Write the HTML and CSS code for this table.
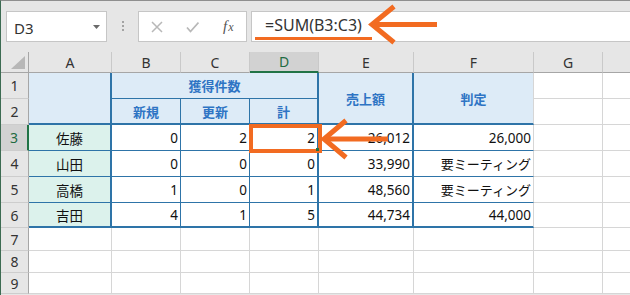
FILE: index.html
```html
<!DOCTYPE html>
<html lang="ja">
<head>
<meta charset="utf-8">
<title>Excel SUM</title>
<link rel="stylesheet" href="styles.css">
</head>
<body>
<div class="window">
  <div class="toolbar">
    <div class="namebox"><span>D3</span><svg class="dd" width="7" height="4" viewBox="0 0 7 4"><path d="M0 0H7L3.5 4Z" fill="#6a6a6a"/></svg></div>
    <div class="grip"><i></i><i></i><i></i></div>
    <div class="fxbox">
      <svg class="ico" width="12" height="12" viewBox="0 0 12 12"><path d="M1 1L11 11M11 1L1 11" stroke="#b8b8b8" stroke-width="1.5" fill="none"/></svg>
      <svg class="ico chk" width="13" height="12" viewBox="0 0 13 12"><path d="M1 6.5L4.5 10.5L12.5 1.5" stroke="#b8b8b8" stroke-width="1.8" fill="none"/></svg>
      <span class="fx">f<span class="fxx">x</span></span>
    </div>
    <div class="formula"><span class="ftext">=SUM(B3:C3)</span></div>
  </div>
  <div class="sheet">
    <div class="ch corner"><svg width="15" height="14" viewBox="0 0 15 14"><path d="M14 0V13H0Z" fill="#b7b7b7"/></svg></div>
    <div class="ch">A</div><div class="ch">B</div><div class="ch">C</div><div class="ch sel">D</div><div class="ch">E</div><div class="ch">F</div><div class="ch">G</div><div class="ch"></div>

    <div class="rh">1</div>
    <div class="c h a12 br2 bb2"></div>
    <div class="c h b1 br2 bb1">獲得件数</div>
    <div class="c h e12 br2 bb2">売上額</div>
    <div class="c h f12 bb2">判定</div>
    <div class="c"></div><div class="c"></div>

    <div class="rh">2</div>
    <div class="c h br1 bb2">新規</div>
    <div class="c h br1 bb2">更新</div>
    <div class="c h br2 bb2">計</div>
    <div class="c"></div><div class="c"></div>

    <div class="rh rsel">3</div>
    <div class="c nm br2 bb1">佐藤</div>
    <div class="c r br1 bb1">0</div><div class="c r br1 bb1">2</div><div class="c r br2 bb1">2</div>
    <div class="c r br2 bb1">26,012</div><div class="c r bb1">26,000</div>
    <div class="c"></div><div class="c"></div>

    <div class="rh">4</div>
    <div class="c nm br2 bb1">山田</div>
    <div class="c r br1 bb1">0</div><div class="c r br1 bb1">0</div><div class="c r br2 bb1">0</div>
    <div class="c r br2 bb1">33,990</div><div class="c r bb1 jp">要ミーティング</div>
    <div class="c"></div><div class="c"></div>

    <div class="rh">5</div>
    <div class="c nm br2 bb1">高橋</div>
    <div class="c r br1 bb1">1</div><div class="c r br1 bb1">0</div><div class="c r br2 bb1">1</div>
    <div class="c r br2 bb1">48,560</div><div class="c r bb1 jp">要ミーティング</div>
    <div class="c"></div><div class="c"></div>

    <div class="rh">6</div>
    <div class="c nm br2 bb2">吉田</div>
    <div class="c r br1 bb2">4</div><div class="c r br1 bb2">1</div><div class="c r br2 bb2">5</div>
    <div class="c r br2 bb2">44,734</div><div class="c r bb2">44,000</div>
    <div class="c"></div><div class="c"></div>

    <div class="rh">7</div>
    <div class="c"></div><div class="c"></div><div class="c"></div><div class="c"></div><div class="c"></div><div class="c"></div><div class="c"></div><div class="c"></div>
    <div class="rh">8</div>
    <div class="c"></div><div class="c"></div><div class="c"></div><div class="c"></div><div class="c"></div><div class="c"></div><div class="c"></div><div class="c"></div>
    <div class="rh">9</div>
    <div class="c"></div><div class="c"></div><div class="c"></div><div class="c"></div><div class="c"></div><div class="c"></div><div class="c"></div><div class="c"></div>
  </div>

  <svg class="overlay" width="630" height="295" viewBox="0 0 630 295">
    <rect x="251" y="126" width="69" height="25" fill="none" stroke="#f26b21" stroke-width="4"/>
    <rect x="316" y="148" width="3" height="3" fill="#217346"/>
    <rect x="255" y="37" width="117" height="3" fill="#f26b21"/>
    <path d="M374 24.5H437" stroke="#f26b21" stroke-width="5" fill="none"/>
    <path d="M394 6.5L372 24.5L394 42.5" stroke="#f26b21" stroke-width="5" fill="none" stroke-miterlimit="10"/>
    <path d="M325 139H388" stroke="#f26b21" stroke-width="5" fill="none"/>
    <path d="M346 120.5L324 139L346 157.5" stroke="#f26b21" stroke-width="5" fill="none" stroke-miterlimit="10"/>
  </svg>
</div>
</body>
</html>
```

FILE: styles.css
```css
* {
  box-sizing: border-box;
  margin: 0;
  padding: 0;
}

html, body {
  width: 630px;
  height: 295px;
  overflow: hidden;
  background: #e6e6e6;
}

body {
  font-family: "Noto Sans", "Noto Sans CJK JP", sans-serif;
}

.window {
  position: relative;
  width: 630px;
  height: 295px;
  border-left: 1px solid #3c6b52;
  border-top: 1px solid #8f8f8f;
  overflow: hidden;
  background: #e6e6e6;
}

/* toolbar */
.toolbar {
  display: flex;
  align-items: flex-start;
  height: 51px;
  padding: 10px 0 0 5px;
  background: #e6e6e6;
}

.namebox {
  width: 101px;
  height: 31px;
  flex: none;
  background: #fff;
  border: 1px solid #c6c6c6;
  display: flex;
  align-items: center;
  justify-content: space-between;
  padding: 2px 6px 0 7px;
  font-size: 15px;
  color: #333;
}

.namebox .dd {
  margin-bottom: 2px;
}

.grip {
  flex: none;
  margin: 10px 0 0 15px;
  width: 2px;
  display: flex;
  flex-direction: column;
  gap: 2px;
}

.grip i {
  display: block;
  width: 2px;
  height: 2px;
  background: #a3a3a3;
}

.fxbox {
  flex: none;
  margin-left: 14px;
  width: 109px;
  height: 31px;
  background: #fff;
  border: 1px solid #c6c6c6;
  display: flex;
  align-items: center;
  padding-left: 12px;
}

.fxbox .chk {
  margin-left: 23px;
}

.fx {
  margin-left: 24px;
  font-family: "Liberation Serif", serif;
  font-style: italic;
  font-size: 15px;
  color: #555;
  line-height: 1;
}

.fxx {
  font-size: 12px;
  margin-left: 1px;
}

.formula {
  flex: 1;
  margin-left: 4px;
  height: 31px;
  background: #fff;
  border: 1px solid #c6c6c6;
  border-right: none;
  padding-left: 3px;
}

.ftext {
  display: inline-block;
  margin-top: 3px;
  padding: 0 12px 5px 10px;
  line-height: 20px;
  font-size: 16px;
  color: #333;
}

/* sheet */
.sheet {
  display: grid;
  grid-template-columns: 28px 83px 69px 69px 69px 95px 120px 69px 69px;
  grid-template-rows: 21px 26px 26px 26px 26px 26px 25px 23px 22px 21px;
  background: #fff;
}

.ch {
  background: #e6e6e6;
  border-right: 1px solid #c9c9c9;
  border-bottom: 1px solid #a6a6a6;
  display: flex;
  align-items: center;
  justify-content: center;
  font-size: 14px;
  color: #333;
}

.ch.corner {
  justify-content: flex-end;
  align-items: flex-end;
  padding: 0 2px 2px 0;
  border-right: 1px solid #a6a6a6;
}

.ch.sel {
  background: #d2d2d2;
  border-bottom: 2px solid #217346;
  color: #1f6b42;
}

.rh {
  background: #e6e6e6;
  border-right: 1px solid #a6a6a6;
  border-bottom: 1px solid #cdcdcd;
  display: flex;
  align-items: center;
  justify-content: center;
  font-size: 14px;
  color: #333;
}

.rh.rsel {
  background: #d2d2d2;
  border-right: 2px solid #217346;
  color: #1f6b42;
}

.c {
  border-right: 1px solid #d6d6d6;
  border-bottom: 1px solid #d6d6d6;
  display: flex;
  align-items: center;
  padding: 0 2px;
  font-size: 13.5px;
  color: #111;
  white-space: nowrap;
  overflow: hidden;
}

.r {
  justify-content: flex-end;
}

.jp {
  font-size: 13px;
}

.h {
  background: #ddebf7;
  color: #2e74c4;
  font-weight: bold;
  font-size: 13px;
  justify-content: center;
}

.nm {
  background: #dcf2ec;
  justify-content: center;
}

.a12, .e12, .f12 {
  grid-row: span 2;
}

.b1 {
  grid-column: span 3;
}

.br1 { border-right: 1px solid #2e74a8; }
.br2 { border-right: 2px solid #2e74a8; }
.bb1 { border-bottom: 1px solid #2e74a8; }
.bb2 { border-bottom: 2px solid #2e74a8; }

/* annotations */
.overlay {
  position: absolute;
  left: -1px;
  top: -1px;
  pointer-events: none;
}
```
